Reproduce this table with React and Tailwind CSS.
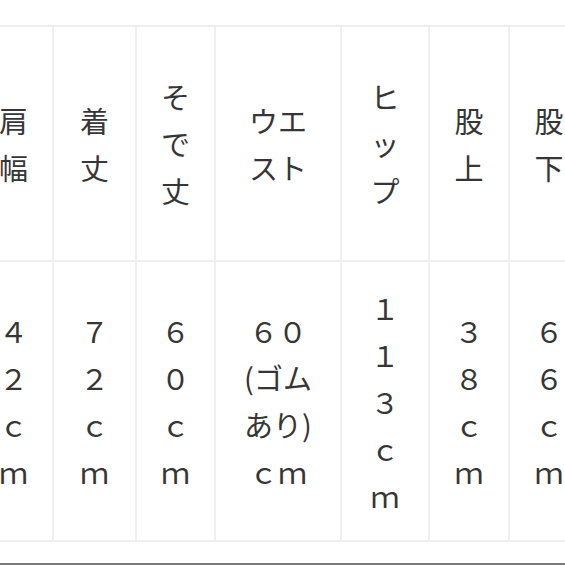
import React from "react";

const headers = [
  ["肩", "幅"],
  ["着", "丈"],
  ["そ", "で", "丈"],
  ["ウエ", "スト"],
  ["ヒ", "ッ", "プ"],
  ["股", "上"],
  ["股", "下"],
];

const values = [
  ["４", "２", "ｃ", "ｍ"],
  ["７", "２", "ｃ", "ｍ"],
  ["６", "０", "ｃ", "ｍ"],
  ["６０", "(ゴム", "あり)", "ｃｍ"],
  ["１", "１", "３", "ｃ", "ｍ"],
  ["３", "８", "ｃ", "ｍ"],
  ["６", "６", "ｃ", "ｍ"],
];

function Cell({ lines }) {
  return (
    <div className="flex flex-col items-center justify-center border-r-2 border-b-2 border-[#efefef] text-center">
      {lines.map((l, i) => (
        <div key={i} className="leading-[47px] whitespace-nowrap">
          {l}
        </div>
      ))}
    </div>
  );
}

export default function App() {
  return (
    <div
      className="w-[565px] h-[565px] bg-white overflow-hidden flex flex-col text-[29px] text-[#363636]"
      style={{ fontFamily: "'Noto Sans CJK JP', sans-serif" }}
    >
      <div className="h-[25px] shrink-0" />
      <div className="h-[2px] shrink-0 bg-[#eeeeee]" />
      <div className="ml-[-25px] grid grid-cols-[79px_83px_79px_126px_88px_80px_80px] grid-rows-[235px_280px]">
        {headers.map((h, i) => (
          <Cell key={"h" + i} lines={h} />
        ))}
        {values.map((v, i) => (
          <Cell key={"v" + i} lines={v} />
        ))}
      </div>
      <div className="flex-1" />
      <div className="h-[2px] shrink-0 bg-[#7a7a7a]" />
    </div>
  );
}
